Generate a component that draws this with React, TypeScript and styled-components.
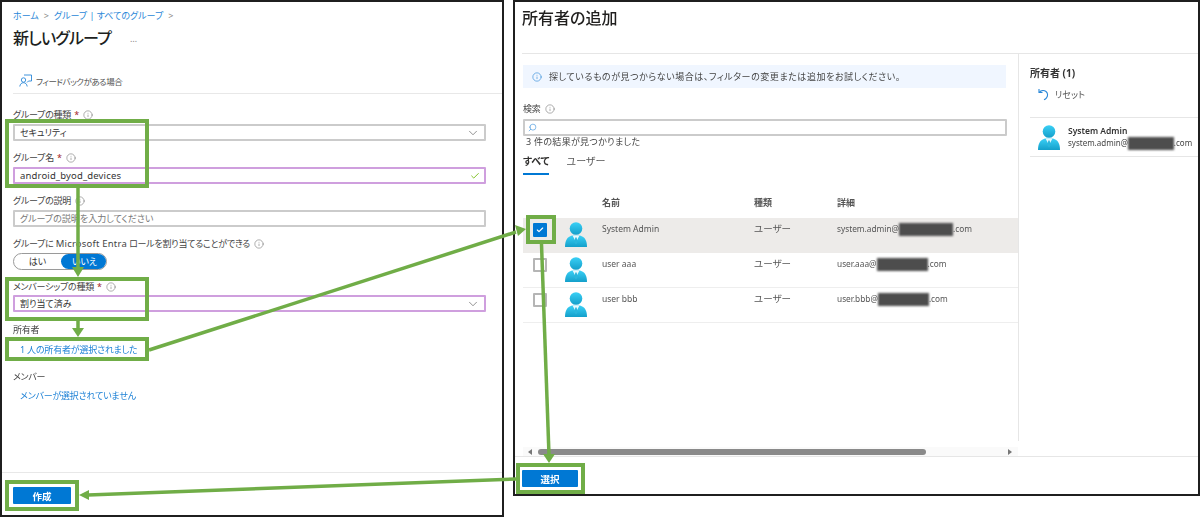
import styled, { createGlobalStyle } from 'styled-components';
import { ChevronDown, Check, Info, Search } from 'lucide-react';

const GlobalStyle = createGlobalStyle`
  html, body { margin: 0; padding: 0; background: #fff; }
  body {
    width: 1200px;
    height: 517px;
    overflow: hidden;
    font-family: "Noto Sans", "Noto Sans CJK JP", sans-serif;
    font-size: 9px;
    font-feature-settings: "palt";
    color: #323130;
  }
  * { box-sizing: border-box; }
`;

// the reference is a resampled screenshot, everything is a little soft
const Page = styled.div`
  position: relative;
  display: flex;
  align-items: flex-start;
  gap: 9px;
  width: 1200px;
  height: 517px;
  filter: blur(0.3px);
`;

const Win = styled.section<{ $h: number; $w?: number }>`
  display: flex;
  flex-direction: column;
  flex: ${(p) => (p.$w ? `0 0 ${p.$w}px` : '1')};
  height: ${(p) => p.$h}px;
  border: 2px solid #1f1f1f;
  background: #fff;
`;

const Crumbs = styled.nav`
  display: flex;
  align-items: center;
  gap: 5px;
  height: 14px;
  margin: 6px 0 0 11px;
  color: #2b88d8;
  font-size: 9px;
`;

const CrumbSep = styled.span`
  color: #8a8886;
  font-size: 9px;
`;

const TitleRow = styled.div`
  display: flex;
  align-items: center;
  height: 20px;
  margin: 6px 0 0 11px;
`;

const Title = styled.h1<{ $tight?: boolean }>`
  margin: 0;
  font-size: 16px;
  font-weight: 500;
  line-height: 20px;
  letter-spacing: ${(p) => (p.$tight ? '-0.8px' : '0')};
  color: #201f1e;
`;

const More = styled.span`
  margin-left: 19px;
  font-size: 9px;
  color: #8a8886;
`;

const FeedbackBar = styled.div`
  display: flex;
  align-items: center;
  gap: 4px;
  height: 22px;
  margin: 24px 0 0 11px;
  padding: 0 0 4px 6px;
  border-bottom: 1px solid #e8e8e8;
  color: #555;
  font-size: 8.5px;
  letter-spacing: -0.5px;
`;

const Form = styled.div`
  padding: 4px 16px 0 11px;
`;

const Field = styled.div<{ $gap?: number; $top?: number }>`
  margin-top: ${(p) => p.$top ?? 11}px;
  & > label { margin-bottom: ${(p) => p.$gap ?? 3}px; }
`;

const Label = styled.label`
  display: flex;
  align-items: center;
  gap: 4px;
  height: 12px;
  color: #444;
  font-size: 9px;
  line-height: 12px;
  letter-spacing: -0.25px;
`;

const LabelText = styled.span`
  white-space: pre;
`;

const Latin = styled.span`
  font-size: 9.5px;
  letter-spacing: 0.2px;
`;

const Req = styled.span`
  color: #a4262c;
  margin-left: -1px;
`;

const Control = styled.div<{ $accent?: boolean; $muted?: boolean }>`
  display: flex;
  align-items: center;
  justify-content: space-between;
  height: 17px;
  padding: 0 4px 0 5px;
  border: 2px solid ${(p) => (p.$accent ? '#cf9fde' : '#cbcbcb')};
  border-radius: 1px;
  color: ${(p) => (p.$muted ? '#777' : '#333')};
  font-size: 9px;
  background: #fff;
`;

const Typed = styled.span`
  font-size: 9.5px;
  letter-spacing: 0.15px;
`;

const Toggle = styled.div`
  display: grid;
  grid-template-columns: 47px 47px;
  width: 94px;
  height: 17px;
  border: 1px solid #9a9a9a;
  border-radius: 9px;
  overflow: hidden;
  text-align: center;
  line-height: 15px;
  font-size: 9px;
`;

const ToggleOn = styled.span`
  background: #0078d4;
  color: #fff;
  border-radius: 9px;
`;

const Link = styled.div<{ $top?: number }>`
  height: 16px;
  margin-top: ${(p) => p.$top ?? 6}px;
  padding-left: 7px;
  color: #1f82d6;
  font-size: 9px;
  line-height: 16px;
  letter-spacing: -0.2px;
`;

const Footer = styled.footer`
  margin-top: auto;
  padding: 14px 0 0 11px;
  border-top: 1px solid #e8e8e8;
  height: 43px;
`;

const Primary = styled.button<{ $w: number }>`
  display: block;
  width: ${(p) => p.$w}px;
  height: 17px;
  padding: 0;
  border: 0;
  border-radius: 1px;
  background: #0078d4;
  color: #fff;
  font-family: inherit;
  font-size: 9.5px;
  font-weight: 700;
`;

const PanelHead = styled.header`
  height: 52px;
  margin-left: 7px;
  padding-top: 6px;
  border-bottom: 1px solid #e6e6e6;
`;

const Body = styled.div`
  display: flex;
  flex: 1;
  min-height: 0;
`;

const Main = styled.div`
  flex: 0 0 504px;
  padding: 11px 12px 0 8px;
  border-right: 1px solid #e6e6e6;
`;

const Notice = styled.div`
  display: flex;
  align-items: center;
  gap: 7px;
  height: 23px;
  padding-left: 9px;
  background: #f0f6ff;
  color: #444;
  font-size: 9px;
  letter-spacing: 0.55px;
`;

const SearchField = styled(Control)`
  justify-content: flex-start;
  margin-right: -1px;
  padding-left: 3px;
`;

const ResultCount = styled.div`
  height: 12px;
  padding-left: 3px;
  line-height: 12px;
  font-size: 9px;
  letter-spacing: 0.3px;
  color: #444;
`;

const Tabs = styled.div`
  display: flex;
  gap: 17px;
  margin-top: 7px;
`;

const Tab = styled.div<{ $active?: boolean }>`
  height: 20px;
  line-height: 12px;
  font-size: 10px;
  color: ${(p) => (p.$active ? '#323130' : '#555')};
  font-weight: ${(p) => (p.$active ? 700 : 400)};
  border-bottom: 2px solid ${(p) => (p.$active ? '#0078d4' : 'transparent')};
`;

const Table = styled.div`
  margin: 22px -12px 0 0;
`;

const Row = styled.div<{ $head?: boolean; $selected?: boolean }>`
  display: grid;
  grid-template-columns: 79px 152px 83px 1fr;
  height: ${(p) => (p.$head ? 21 : 35)}px;
  background: ${(p) => (p.$selected ? '#edebe9' : 'transparent')};
  border-bottom: ${(p) => (p.$head || p.$selected ? '0' : '1px solid #eee')};
  color: #555;
  font-size: 9px;
  line-height: 12px;
  font-weight: ${(p) => (p.$head ? 700 : 400)};
`;

const Cell = styled.div<{ $size?: number }>`
  display: flex;
  align-items: flex-start;
  padding-top: 5px;
  font-size: ${(p) => p.$size ?? 9}px;
  white-space: nowrap;
`;

const HeadCell = styled.div`
  line-height: 12px;
`;

const PickCell = styled.div`
  display: flex;
  align-items: flex-start;
  gap: 18px;
  padding: 4px 0 0 10px;
`;

const Box = styled.span<{ $on?: boolean }>`
  display: flex;
  align-items: center;
  justify-content: center;
  flex: 0 0 14px;
  width: 14px;
  height: 14px;
  margin-top: 1px;
  border: 2px solid ${(p) => (p.$on ? '#0078d4' : '#b5b5b5')};
  border-radius: 1px;
  background: ${(p) => (p.$on ? '#0078d4' : '#fff')};
  color: #fff;
`;

const Masked = styled.span<{ $w: number }>`
  display: inline-block;
  width: ${(p) => p.$w}px;
  height: 13px;
  background: #4d4d4d;
  filter: blur(1px);
`;

const Side = styled.aside`
  flex: 1;
  padding: 13px 0 0 11px;
`;

const SideTitle = styled.div`
  height: 12px;
  line-height: 12px;
  font-size: 10px;
  font-weight: 700;
  color: #333;
`;

const Reset = styled.div`
  display: flex;
  align-items: center;
  gap: 6px;
  height: 12px;
  margin-top: 9px;
  padding-left: 8px;
  font-size: 9px;
  color: #555;
`;

const Picked = styled.div`
  display: flex;
  gap: 8px;
  height: 40px;
  margin-top: 17px;
  padding: 7px 0 0 8px;
  border-top: 1px solid #e6e6e6;
  border-bottom: 1px solid #e6e6e6;
`;

const PickedName = styled.div`
  height: 12px;
  line-height: 12px;
  font-size: 8.5px;
  font-weight: 600;
  color: #333;
`;

const PickedMail = styled.div`
  display: flex;
  height: 12px;
  line-height: 12px;
  font-size: 8px;
  color: #444;
`;

const Scroller = styled.div`
  display: flex;
  align-items: center;
  height: 9px;
  margin: 6px 0 0 8px;
  width: 495px;
  background: #fafafa;
`;

const ArrowL = styled.span`
  width: 0;
  height: 0;
  margin-left: 5px;
  border: 3px solid transparent;
  border-left: 0;
  border-right: 4px solid #777;
`;

const Thumb = styled.span`
  width: 388px;
  height: 6px;
  margin-left: 6px;
  border-radius: 3px;
  background: #8a8a8a;
`;

const ArrowR = styled.span`
  width: 0;
  height: 0;
  margin-left: 82px;
  border: 3px solid transparent;
  border-right: 0;
  border-left: 4px solid #777;
`;

const PanelFooter = styled.footer`
  height: 38px;
  padding: 13px 0 0 7px;
  border-top: 1px solid #e6e6e6;
`;

const Callout = styled.div<{ $x: number; $y: number; $w: number; $h: number }>`
  position: absolute;
  left: ${(p) => p.$x}px;
  top: ${(p) => p.$y}px;
  width: ${(p) => p.$w}px;
  height: ${(p) => p.$h}px;
  border: 4px solid #70ad47;
  pointer-events: none;
`;

const Arrows = styled.svg`
  position: absolute;
  left: 0;
  top: 0;
  pointer-events: none;
`;

function InfoIcon() {
  return <Info size={10} strokeWidth={1.3} color="#6b6b6b" />;
}

function Avatar() {
  return (
    <svg width="22" height="25" viewBox="0 0 22 25">
      <defs>
        <linearGradient id="av" x1="0" y1="0" x2="0" y2="1">
          <stop offset="0" stopColor="#3ad0f6" />
          <stop offset="1" stopColor="#149fca" />
        </linearGradient>
      </defs>
      <circle cx="11" cy="6.500" r="6.300" fill="url(#av)" />
      <path d="M0 25c0-6.500 2-10 7-11.500h8c5 1.500 7 5 7 11.500z" fill="url(#av)" />
      <path d="M7.500 13.500h7L11 20z" fill="#e9f8fd" />
      <path d="M10.300 15.500h1.400l0.800 5-1.500 2-1.500-2z" fill="#2bb6dc" />
    </svg>
  );
}

function FeedbackIcon() {
  return (
    <svg width="13" height="13" viewBox="0 0 13 13" fill="none" stroke="#2b88d8" strokeWidth="0.9">
      <circle cx="4.500" cy="6" r="2.200" />
      <path d="M0.800 12.500c0.300-2.500 1.800-3.800 3.700-3.800s3.400 1.300 3.700 3.800" />
      <path d="M5 1h7.500v6H9.500L8 8.500" />
    </svg>
  );
}

function ResetIcon() {
  return (
    <svg width="11" height="13" viewBox="0 0 11 13" fill="none" stroke="#2b88d8" strokeWidth="1.100">
      <path d="M1 1v3.500h3.500" />
      <path d="M1.200 4.300C3 2.500 6 2 8 3.500c2 1.600 2 4.500 0.500 6.300-0.700 0.900-1.500 1.500-2.500 2" />
    </svg>
  );
}

const users = [
  { name: 'System Admin', local: 'system.admin@', mask: 54, end: '.com' },
  { name: 'user aaa', local: 'user.aaa@', mask: 51, end: '.com' },
  { name: 'user bbb', local: 'user.bbb@', mask: 51, end: '.com' },
];

const arrowColor = '#70ad47';

export default function App() {
  return (
    <Page>
      <GlobalStyle />
      <Win $h={517} $w={504}>
        <Crumbs>
          <span>ホーム</span>
          <CrumbSep>&gt;</CrumbSep>
          <span>グループ | すべてのグループ</span>
          <CrumbSep>&gt;</CrumbSep>
        </Crumbs>
        <TitleRow>
          <Title $tight>新しいグループ</Title>
          <More>…</More>
        </TitleRow>
        <FeedbackBar>
          <FeedbackIcon />
          フィードバックがある場合
        </FeedbackBar>
        <Form>
          <Field>
            <Label>
              グループの種類 <Req>*</Req> <InfoIcon />
            </Label>
            <Control>
              セキュリティ
              <ChevronDown size={14} strokeWidth={1} color="#444" />
            </Control>
          </Field>
          <Field>
            <Label>
              グループ名 <Req>*</Req> <InfoIcon />
            </Label>
            <Control $accent>
              <Typed>android_byod_devices</Typed>
              <Check size={10} strokeWidth={2} color="#6bb700" />
            </Control>
          </Field>
          <Field>
            <Label>
              グループの説明 <InfoIcon />
            </Label>
            <Control $muted>グループの説明を入力してください</Control>
          </Field>
          <Field>
            <Label>
              <LabelText>
                グループに <Latin>Microsoft Entra</Latin> ロールを割り当てることができる
              </LabelText>
              <InfoIcon />
            </Label>
            <Toggle>
              <span>はい</span>
              <ToggleOn>いいえ</ToggleOn>
            </Toggle>
          </Field>
          <Field $gap={2}>
            <Label>
              メンバーシップの種類 <Req>*</Req> <InfoIcon />
            </Label>
            <Control $accent>
              割り当て済み
              <ChevronDown size={14} strokeWidth={1} color="#444" />
            </Control>
          </Field>
          <Field $top={12}>
            <Label>所有者</Label>
            <Link>1 人の所有者が選択されました</Link>
          </Field>
          <Field $top={13}>
            <Label>メンバー</Label>
            <Link $top={5}>メンバーが選択されていません</Link>
          </Field>
        </Form>
        <Footer>
          <Primary $w={58}>作成</Primary>
        </Footer>
      </Win>

      <Win $h={496}>
        <PanelHead>
          <Title>所有者の追加</Title>
        </PanelHead>
        <Body>
          <Main>
            <Notice>
              <Info size={10} strokeWidth={1.5} color="#2b88d8" />
              探しているものが見つからない場合は、フィルターの変更または追加をお試しください。
            </Notice>
            <Field $top={15} $gap={4}>
              <Label>
                検索 <InfoIcon />
              </Label>
              <SearchField>
                <Search size={9} strokeWidth={1.5} color="#2b88d8" style={{ transform: 'scaleX(-1)' }} />
              </SearchField>
            </Field>
            <ResultCount>3 件の結果が見つかりました</ResultCount>
            <Tabs>
              <Tab $active>すべて</Tab>
              <Tab>ユーザー</Tab>
            </Tabs>
            <Table>
              <Row $head>
                <span />
                <HeadCell>名前</HeadCell>
                <HeadCell>種類</HeadCell>
                <HeadCell>詳細</HeadCell>
              </Row>
              {users.map((u, i) => (
                <Row key={u.name} $selected={i === 0}>
                  <PickCell>
                    <Box $on={i === 0}>{i === 0 && <Check size={8} strokeWidth={3.5} />}</Box>
                    <Avatar />
                  </PickCell>
                  <Cell $size={8.5}>{u.name}</Cell>
                  <Cell $size={9.5}>ユーザー</Cell>
                  <Cell $size={8.3}>
                    {u.local}
                    <Masked $w={u.mask} />
                    {u.end}
                  </Cell>
                </Row>
              ))}
            </Table>
          </Main>
          <Side>
            <SideTitle>所有者 (1)</SideTitle>
            <Reset>
              <ResetIcon />
              リセット
            </Reset>
            <Picked>
              <Avatar />
              <div>
                <PickedName>System Admin</PickedName>
                <PickedMail>
                  system.admin@
                  <Masked $w={46} />
                  .com
                </PickedMail>
              </div>
            </Picked>
          </Side>
        </Body>
        <Scroller>
          <ArrowL />
          <Thumb />
          <ArrowR />
        </Scroller>
        <PanelFooter>
          <Primary $w={56}>選択</Primary>
        </PanelFooter>
      </Win>

      <Callout $x={5} $y={119} $w={144} $h={69} />
      <Callout $x={5} $y={277} $w={144} $h={44} />
      <Callout $x={5} $y={337} $w={144} $h={24} />
      <Callout $x={5} $y={480} $w={74} $h={31} />
      <Callout $x={526} $y={215} $w={30} $h={29} />
      <Callout $x={516} $y={463} $w={69} $h={31} />

      <Arrows width="1200" height="517" viewBox="0 0 1200 517">
        <g stroke={arrowColor} strokeWidth="3.500" fill="none">
          <path d="M78 188V268" />
          <path d="M78 321V329" />
          <path d="M149 350L516 232" />
          <path d="M541.500 244L549 455" />
          <path d="M516 479L88 495" />
        </g>
        <g fill={arrowColor}>
          <path d="M72 267h12l-6 10z" />
          <path d="M72 328h12l-6 9z" />
          <path d="M526 229l-11-4 3 11z" />
          <path d="M543 454h12l-6 9z" />
          <path d="M79 495l10-5v10z" />
        </g>
      </Arrows>
    </Page>
  );
}
